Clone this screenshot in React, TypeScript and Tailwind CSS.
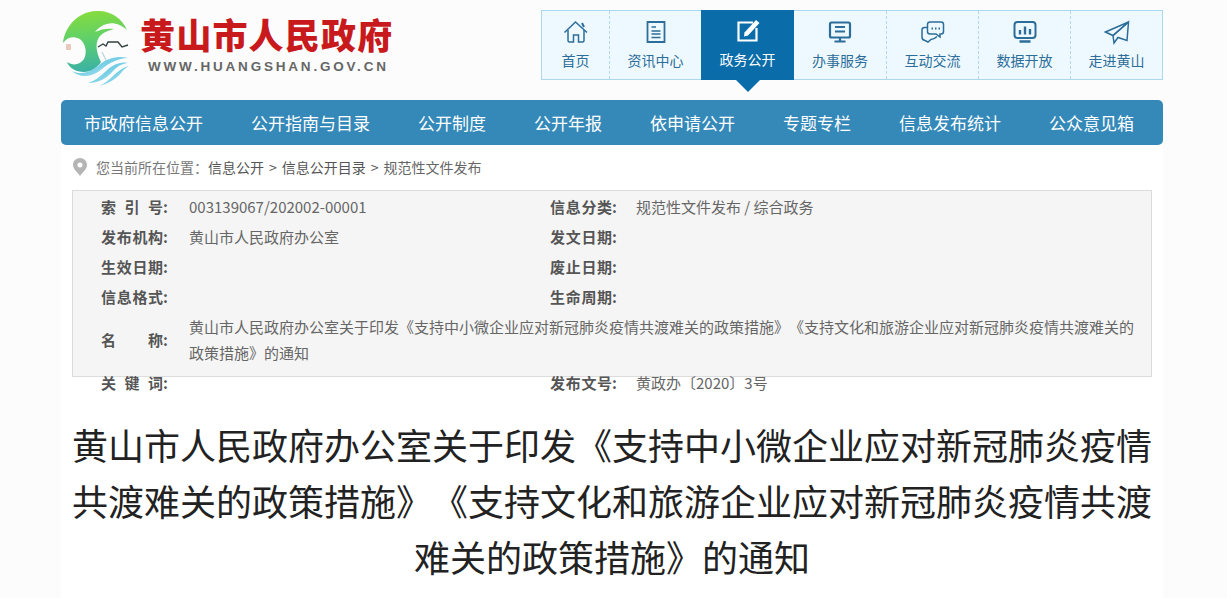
import React from 'react';

const font = { fontFamily: '"Noto Sans CJK SC", "Liberation Sans", sans-serif' };

const navIcons: Record<string, React.ReactNode> = {
  home: (
    <>
      <path d="M1.5 13.5 L12.5 3 L24 13.5" />
      <path d="M5 11 V21.5 Q5 23 6.5 23 H10.5 V16 H15.5 V23 H19.5 Q21 23 21 21.5 V11" />
      <path d="M19 4 L21 8" strokeWidth={2} />
    </>
  ),
  news: (
    <>
      <path d="M4.5 3 H21.5 V23 H4.5 Z" strokeWidth={1.8} />
      <path d="M8.5 8 H13 M8.5 12 H17.5 M8.5 15 H17.5 M8.5 18.5 H17.5" />
    </>
  ),
  gov: (
    <>
      <path d="M18 4.5 H3.5 V22.5 H21.5 V10" strokeWidth={2.2} />
      <path d="M9.5 14.5 L21 2 L24.5 5 L13 17.5 L9 18.5 Z" fill="currentColor" stroke="none" />
    </>
  ),
  service: (
    <>
      <rect x="3" y="3.5" width="20" height="15" rx="1.5" strokeWidth={2.2} />
      <path d="M8 8 H18 M8 12.5 H18 M13 18 V22 M7.5 22.5 H18.5" strokeWidth={2.2} />
    </>
  ),
  talk: (
    <>
      <path d="M10 3 H21 Q23.5 3 23.5 5.5 V12.5 Q23.5 15 21 15 H20 V18 L16 15 H10 Q7.5 15 7.5 12.5 V5.5 Q7.5 3 10 3 Z" />
      <path d="M7 8.5 H4.5 Q2 8.5 2 11 V18 Q2 21 5 21.5 L8 23 L11 20.5 Q14 20.5 17 17.5" />
      <path d="M11.5 9.5 H13 M15 9.5 H16.5 M18.5 9.5 H20" strokeWidth={1.8} />
    </>
  ),
  data: (
    <>
      <rect x="2.5" y="3" width="21" height="16" rx="3" strokeWidth={2} />
      <path d="M8 11 V15.5 M13 7.5 V15.5 M18 10 V15.5 M7.5 22.5 H18.5" strokeWidth={2.4} />
    </>
  ),
  plane: (
    <>
      <path d="M24.5 3 L1.5 13 L9 16.5 Z" />
      <path d="M24.5 3 L9 16.5 L10 24 L14 18.5 L23 21.5 Z" />
    </>
  ),
};

const tabs = [
  { label: '首页', icon: 'home', width: 'w-[67px]' },
  { label: '资讯中心', icon: 'news', width: 'w-[92px]' },
  { label: '政务公开', icon: 'gov', width: 'w-[93px]', active: true },
  { label: '办事服务', icon: 'service', width: 'w-[92px]' },
  { label: '互动交流', icon: 'talk', width: 'w-[92px]' },
  { label: '数据开放', icon: 'data', width: 'w-[92px]' },
  { label: '走进黄山', icon: 'plane', width: 'w-[92px]' },
];

const menu = ['市政府信息公开', '公开指南与目录', '公开制度', '公开年报', '依申请公开', '专题专栏', '信息发布统计', '公众意见箱'];

function Logo() {
  return (
    <svg width="68" height="76" viewBox="4 4 68 76" className="ml-px shrink-0">
      <defs>
        <linearGradient id="leaf" x1="0.4" y1="0" x2="0.5" y2="1">
          <stop offset="0" stopColor="#86dc3c" />
          <stop offset="0.45" stopColor="#5fd06a" />
          <stop offset="1" stopColor="#3ab0a8" />
        </linearGradient>
        <linearGradient id="wave" x1="0" y1="0" x2="1" y2="1">
          <stop offset="0" stopColor="#46bde0" />
          <stop offset="1" stopColor="#b3e6ee" />
        </linearGradient>
      </defs>
      <path
        d="M5 37 C7 20 20 6 38 5 C52 4 64 12 69 24 C63 19 56 16 49 18 C44 19 40 22 37 26 C43 23 50 22 56 23 C49 25 43 27 40 33 C37 39 39 48 43 56 C39 62 33 66 26 66 C18 66 11 62 9 56 C15 60 22 59 26 53 C29 47 28 39 23 34 C18 30 10 30 5 37 Z"
        fill="url(#leaf)"
      />
      <rect x="8" y="38" width="5" height="6" rx="1" fill="#e8c9bd" />
      <path d="M40 41 L45 38 L48 40 L50 36 L60 36 L64 41 L70 39" stroke="#33413f" strokeWidth="1.4" fill="none" />
      <path d="M44 46 L49 56" stroke="#b7d5d4" strokeWidth="1.2" fill="none" />
      <path d="M14 65 C22 72 34 72 44 63 C52 56 62 52 70 52 C58 49 48 53 40 60 C32 67 22 69 14 65 Z" fill="url(#wave)" />
      <path d="M30 77 C42 77 50 71 56 64 C61 59 66 57 71 57 C62 55 54 59 47 66 C42 71 36 75 30 77 Z" fill="url(#wave)" />
      <path d="M41 80 C50 78 58 73 63 67 C66 63 69 61 71 60 C66 61 60 65 55 70 C51 74 46 78 41 80 Z" fill="url(#wave)" />
    </svg>
  );
}

function Label({ chars }: { chars: string[] }) {
  return (
    <span className="flex w-[67px] shrink-0 justify-between text-[15px] font-bold text-[#555]">
      {chars.map((c, i) => (
        <span key={i}>{c}</span>
      ))}
    </span>
  );
}

function Field({ chars, value, width, gap }: { chars: string[]; value?: string; width: string; gap: string }) {
  return (
    <div className={`flex items-center ${width}`}>
      <Label chars={chars} />
      <span className={`text-[15px] whitespace-nowrap text-[#666] ${gap}`}>{value}</span>
    </div>
  );
}

export default function App() {
  return (
    <div className="h-[598px] overflow-hidden bg-[#fcfcfc] text-[#333] [text-spacing-trim:space-all]" style={font}>
      <div className="ml-[61px] w-[1102px]">
        <header className="flex h-[100px] items-start justify-between">
          <div className="flex pt-[10px]">
            <Logo />
            <div className="ml-[10px] flex flex-col">
              <div className="mt-px text-[35px] leading-[46px] font-black tracking-[1.2px] whitespace-nowrap text-[#c8191d]">黄山市人民政府</div>
              <div className="mt-px ml-[8px] text-[13.5px] leading-[18px] font-bold tracking-[2.8px] text-[#666]" style={{ fontFamily: '"Liberation Sans", sans-serif' }}>
                WWW.HUANGSHAN.GOV.CN
              </div>
            </div>
          </div>
          <nav className="mt-[10px] flex h-[70px] border border-[#a9d8ef] bg-[#eef9ff]">
            {tabs.map((tab, i) => (
              <div
                key={tab.label}
                className={`relative flex flex-col items-center ${tab.width} ${
                  tab.active ? '-my-px h-[70px] bg-[#0a6ca8] text-white' : 'text-[#2c6d99]'
                } ${!tab.active && i > 0 && !tabs[i - 1].active ? 'border-l border-dashed border-[#b5d9ea]' : ''}`}
              >
                <svg width="26" height="26" viewBox="0 0 26 26" fill="none" stroke="currentColor" strokeWidth={1.5} className="mt-[8px]">
                  {navIcons[tab.icon]}
                </svg>
                <span className="mt-[5px] text-[14px] leading-[20px] whitespace-nowrap">{tab.label}</span>
                {tab.active && (
                  <span className="absolute top-[70px] left-1/2 h-0 w-0 -translate-x-1/2 border-x-[12px] border-t-[12px] border-x-transparent border-t-[#0a6ca8]" />
                )}
              </div>
            ))}
          </nav>
        </header>

        <div className="flex h-[45px] items-center gap-[48px] rounded-[5px] bg-[#3589b9] pl-[23px] text-[17px] whitespace-nowrap text-white">
          {menu.map((m) => (
            <span key={m}>{m}</span>
          ))}
        </div>

        <main className="h-[453px] bg-white px-[11px]">
          <div className="flex h-[45px] items-center pb-px text-[14px] text-[#555]">
            <svg width="14" height="18" viewBox="0 0 14 18" className="mr-[9px] ml-[1px]">
              <path fillRule="evenodd" d="M7 0 C3 0 0 3 0 7 C0 11 5 15 7 18 C9 15 14 11 14 7 C14 3 11 0 7 0 Z M7 4.5 A2.5 2.5 0 1 1 7 9.5 A2.5 2.5 0 1 1 7 4.5 Z" fill="#b5b5b5" />
            </svg>
            <span className="text-[#777]">您当前所在位置：</span>
            <span>信息公开</span>
            <span className="mx-[5px]">&gt;</span>
            <span>信息公开目录</span>
            <span className="mx-[5px]">&gt;</span>
            <span className="text-[#666]">规范性文件发布</span>
          </div>

          <section className="h-[187px] border border-[#dcdcdc] bg-[#f5f5f5] pt-px pl-[28px] leading-[30px]">
            <div className="flex h-[30px]">
              <Field chars={['索', '引', '号:']} value="003139067/202002-00001" width="w-[449px]" gap="ml-[21px]" />
              <Field chars={['信', '息', '分', '类:']} value="规范性文件发布 / 综合政务" width="w-[500px]" gap="ml-[19px]" />
            </div>
            <div className="flex h-[30px]">
              <Field chars={['发', '布', '机', '构:']} value="黄山市人民政府办公室" width="w-[449px]" gap="ml-[21px]" />
              <Field chars={['发', '文', '日', '期:']} width="w-[500px]" gap="ml-[19px]" />
            </div>
            <div className="flex h-[30px]">
              <Field chars={['生', '效', '日', '期:']} width="w-[449px]" gap="ml-[21px]" />
              <Field chars={['废', '止', '日', '期:']} width="w-[500px]" gap="ml-[19px]" />
            </div>
            <div className="flex h-[30px]">
              <Field chars={['信', '息', '格', '式:']} width="w-[449px]" gap="ml-[21px]" />
              <Field chars={['生', '命', '周', '期:']} width="w-[500px]" gap="ml-[19px]" />
            </div>
            <div className="flex h-[56px] items-center">
              <Label chars={['名', '称:']} />
              <p className="ml-[21px] w-[950px] text-[15px] leading-[26px] text-[#666]">
                黄山市人民政府办公室关于印发《支持中小微企业应对新冠肺炎疫情共渡难关的政策措施》《支持文化和旅游企业应对新冠肺炎疫情共渡难关的政策措施》的通知
              </p>
            </div>
            <div className="flex h-[30px]">
              <Field chars={['关', '键', '词:']} width="w-[449px]" gap="ml-[21px]" />
              <Field chars={['发', '布', '文', '号:']} value="黄政办〔2020〕3号" width="w-[500px]" gap="ml-[19px]" />
            </div>
          </section>

          <h1 className="mt-[39px] text-center text-[36px] leading-[56px] font-normal text-[#222]">
            黄山市人民政府办公室关于印发《支持中小微企业应对新冠肺炎疫情共渡难关的政策措施》《支持文化和旅游企业应对新冠肺炎疫情共渡难关的政策措施》的通知
          </h1>
        </main>
      </div>
    </div>
  );
}
